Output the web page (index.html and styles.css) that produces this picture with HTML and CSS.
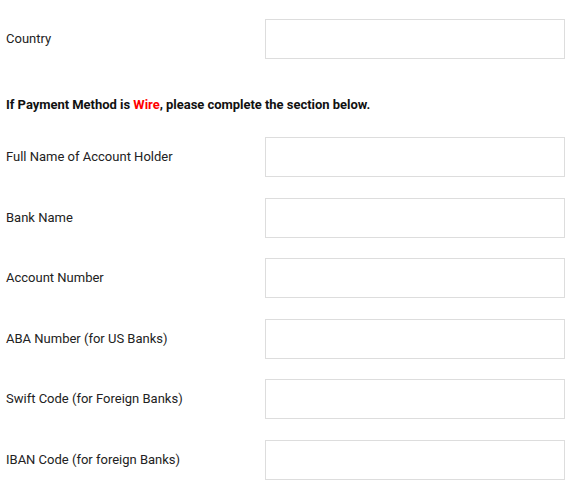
FILE: index.html
```html
<!DOCTYPE html>
<html>
<head>
<meta charset="utf-8">
<link rel="stylesheet" href="styles.css">
</head>
<body>
<div class="form">
  <div class="row"><label class="label">Country</label><input class="field" type="text"></div>
  <p class="note">If Payment Method is <span class="red">Wire</span>, please complete the section below.</p>
  <div class="rows">
    <div class="row"><label class="label">Full Name of Account Holder</label><input class="field" type="text"></div>
    <div class="row"><label class="label">Bank Name</label><input class="field" type="text"></div>
    <div class="row"><label class="label">Account Number</label><input class="field" type="text"></div>
    <div class="row"><label class="label">ABA Number (for US Banks)</label><input class="field" type="text"></div>
    <div class="row"><label class="label">Swift Code (for Foreign Banks)</label><input class="field" type="text"></div>
    <div class="row"><label class="label">IBAN Code (for foreign Banks)</label><input class="field" type="text"></div>
  </div>
</div>
</body>
</html>
```
FILE: styles.css
```css
html, body { margin: 0; padding: 0; background: #fff; }
body { font-family: Roboto, "Liberation Sans", sans-serif; font-size: 13px; color: #222; }
.form { padding: 19px 0 0 6px; }
.rows { display: flex; flex-direction: column; gap: 20.6px; }
.row { display: flex; align-items: center; height: 40px; }
.label { width: 259px; flex: none; padding-bottom: 1px; }
.field { box-sizing: border-box; width: 300px; height: 40px; border: 1px solid #ddd; background: #fff; margin: 0; padding: 0 8px; font: inherit; outline: none; border-radius: 0; }
.note { margin: 0; padding: 38px 0 25px; line-height: 15px; font-weight: bold; color: #111; letter-spacing: -0.03px; }
.red { color: #f00; }
```
